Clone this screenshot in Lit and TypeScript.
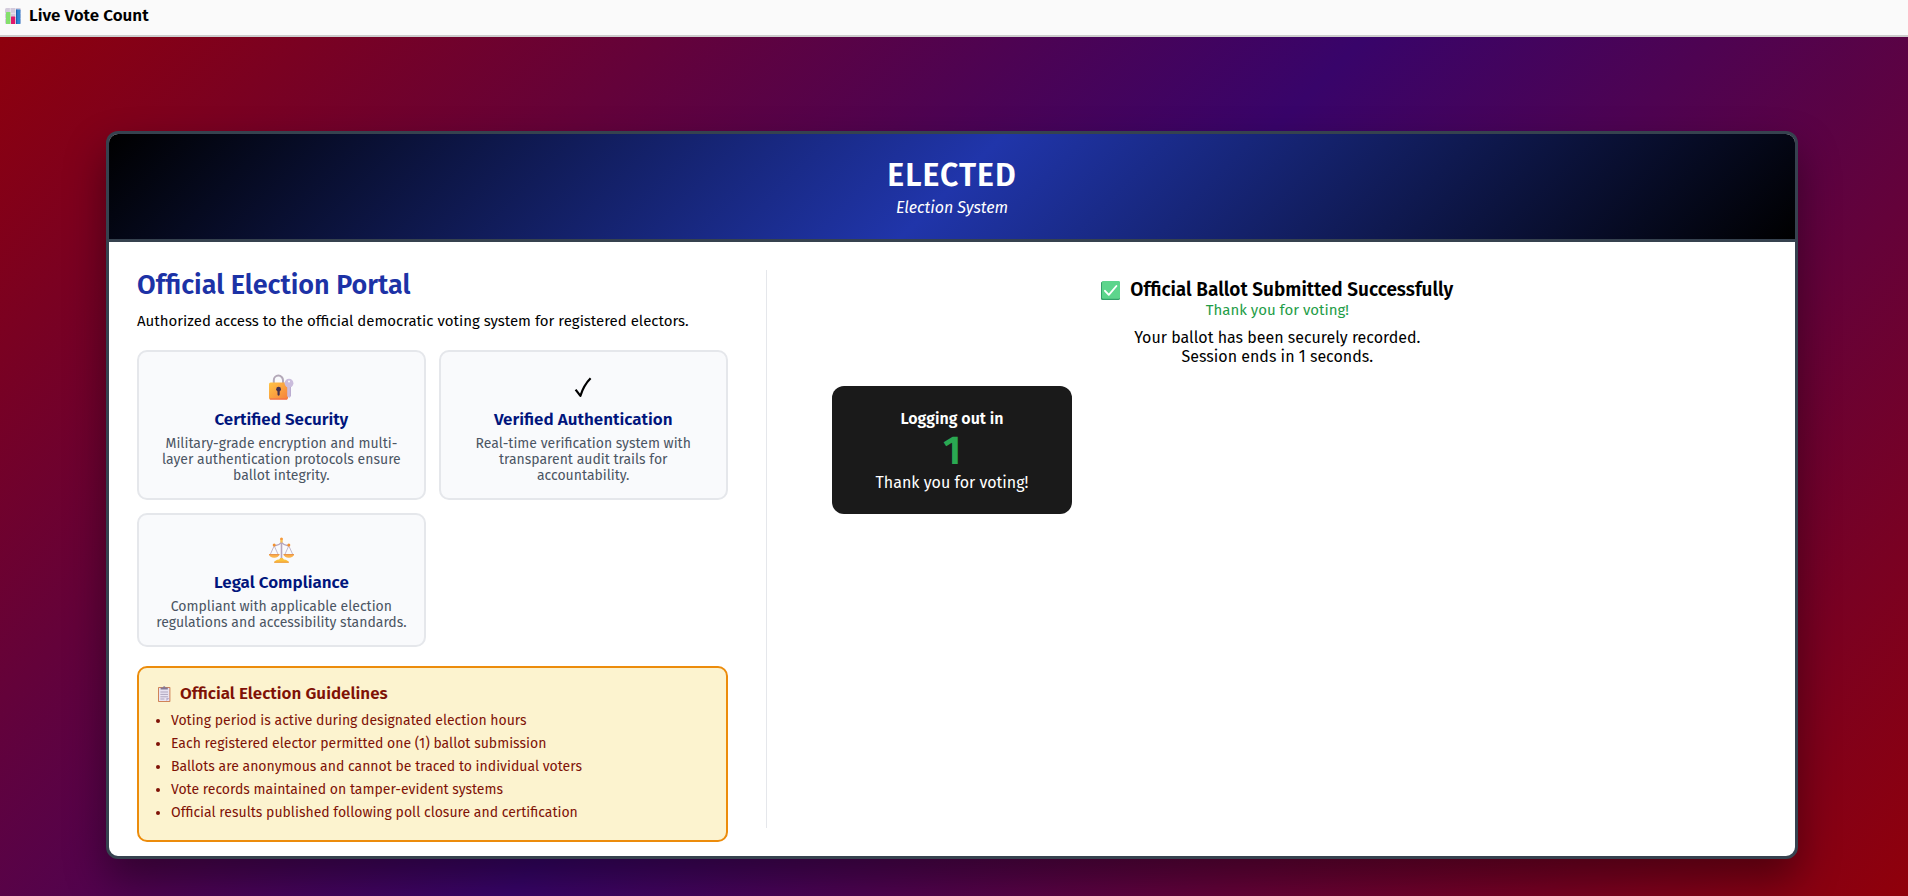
import { LitElement, html, css, svg } from "lit";
import { customElement, property, state } from "lit/decorators.js";

const chartIcon = html`<svg class="icon" viewBox="0 0 16 16" aria-hidden="true">
  <rect x="0" y="0" width="16" height="16" rx="1.5" fill="#d3cbdc" />
  <path d="M0 5.3h16M0 10.6h16M5.3 0v16M10.6 0v16" stroke="#efeaf4" stroke-width=".8" />
  <rect x="1" y="4" width="4.4" height="12" rx=".6" fill="#83e06b" />
  <rect x="6" y="8.6" width="4.2" height="7.4" rx=".6" fill="#e0186c" />
  <rect x="11" y="1.6" width="4.4" height="14.4" rx=".6" fill="#2f86d6" />
  <rect x="11" y="1.6" width="1.2" height="14.4" fill="#1c62b0" />
</svg>`;

const clipboardIcon = html`<svg class="icon" viewBox="0 0 16 16" aria-hidden="true">
  <rect x="2" y="1" width="12.4" height="15" rx=".8" fill="#cf8358" />
  <rect x="3" y="2" width="10.4" height="13" fill="#e9e4f2" />
  <path d="M10.4 15v-3h3z" fill="#b9aed0" />
  <path d="M4.4 6h7.600M4.400 8.400h7.600M4.400 10.800h7.600M4.400 13h4" stroke="#a79db8" stroke-width=".9" />
  <path d="M4.600 3.600V1.400H7a1.200 1.200 0 0 1 2.400 0h2.400v2.200z" fill="#847894" />
</svg>`;

const tickBoxIcon = html`<svg class="icon-md" viewBox="0 0 19 19" aria-hidden="true">
  <rect x="0" y=".4" width="19" height="18.6" rx="1.6" fill="#35a06a" />
  <rect x="1" y="0" width="18" height="17.8" rx="1.4" fill="#5dd58c" />
  <path d="M4 9.8l3.8 4L15.4 5" fill="none" stroke="#fff" stroke-width="1.9" stroke-linecap="round" stroke-linejoin="round" />
</svg>`;

const lockIcon = svg`
  <defs><linearGradient id="body" x1="0" y1="0" x2="1" y2="1">
    <stop offset="0" stop-color="#ffc444" /><stop offset="1" stop-color="#f57f3c" />
  </linearGradient></defs>
  <path d="M4.800 10V6.200a4.600 4.600 0 0 1 9.200 0V10" fill="none" stroke="#b3a8b8" stroke-width="2" />
  <rect x="0" y="8.600" width="19" height="17" rx="1.600" fill="url(#body)" />
  <path d="M1 25h17" stroke="#f26f4c" stroke-width="1.200" />
  <circle cx="9.600" cy="15.200" r="2.400" fill="#42304f" />
  <path d="M9.600 15v5.600" stroke="#42304f" stroke-width="2.200" stroke-linecap="round" />
  <circle cx="20" cy="9.200" r="4.400" fill="#cabcdc" />
  <path d="M18.200 12h3.800v10.200L20.200 24l-2-1.800z" fill="#cabcdc" />
  <circle cx="20" cy="7.600" r="1" fill="#f9fafc" />
  <path d="M21.400 13v9" stroke="#b5a4cc" stroke-width=".8" />`;

const checkIcon = svg`
  <path d="M4.600 15.600l4.800 6.200C11.400 15.400 14.400 9.400 19.600 4.200" fill="none" stroke="#000" stroke-width="2.200" stroke-linejoin="round" />`;

const scaleIcon = svg`
  <path d="M12.500 4v18" stroke="#b6a6be" stroke-width="1.600" />
  <path d="M5.400 8.400c3.400.8 5-.6 7.100-3 2.100 2.400 3.700 3.800 7.100 3" fill="none" stroke="#b6a6be" stroke-width="1.400" />
  <path d="M5.200 8.800L1.200 17.600M5.200 8.800l4 8.800M19.800 8.800l-4 8.800M19.800 8.800l4 8.800" stroke="#bdb0c6" stroke-width=".9" />
  <path d="M0 17h10.400a5.200 3.800 0 0 1-10.400 0zM14.600 17H25a5.200 3.800 0 0 1-10.400 0z" fill="#fbb34c" />
  <path d="M0 17h10.400v1.200H0zM14.600 17H25v1.200H14.600z" fill="#e9954a" />
  <circle cx="12.500" cy="2" r="1.500" fill="#f59a3a" />
  <rect x="11.400" y="3" width="2.200" height="2.600" fill="#f7c052" />
  <circle cx="5.200" cy="8" r="1.500" fill="#f3912f" /><circle cx="19.800" cy="8" r="1.500" fill="#f3912f" />
  <path d="M5.200 25.600c0-2 2.600-3 5-3.200l1-1.400h2.600l1 1.400c2.400.2 5 1.200 5 3.200z" fill="#fbc13c" />
  <path d="M5.200 24.600h14.600v1.200H5.200z" fill="#ef9d3d" />`;

interface Feature {
  icon: unknown;
  title: string;
  text: string;
}

const FEATURES: Feature[] = [
  {
    icon: lockIcon,
    title: "Certified Security",
    text: "Military-grade encryption and multi-layer authentication protocols ensure ballot integrity.",
  },
  {
    icon: checkIcon,
    title: "Verified Authentication",
    text: "Real-time verification system with transparent audit trails for accountability.",
  },
  {
    icon: scaleIcon,
    title: "Legal Compliance",
    text: "Compliant with applicable election regulations and accessibility standards.",
  },
];

const GUIDELINES = [
  "Voting period is active during designated election hours",
  "Each registered elector permitted one (1) ballot submission",
  "Ballots are anonymous and cannot be traced to individual voters",
  "Vote records maintained on tamper-evident systems",
  "Official results published following poll closure and certification",
];

const reset = css`
  * {
    box-sizing: border-box;
  }
  h1, h2, h3, p, ul {
    margin: 0;
    padding: 0;
  }
  h1, h2, h3, strong {
    font-weight: 600;
  }
`;

@customElement("feature-card")
export class FeatureCard extends LitElement {
  static styles = [
    reset,
    css`
      :host {
        display: flex;
        flex-direction: column;
        align-items: center;
        gap: 6px;
        box-sizing: border-box;
        padding: 20px 16px 14px;
        border: 2px solid #e5e7eb;
        border-radius: 10px;
        background: #f9fafc;
        text-align: center;
      }
      .glyph {
        width: 25px;
        height: 26px;
        margin: 2px 0 4px;
      }
      .title {
        color: #00157c;
        font-size: 17px;
        line-height: 20px;
      }
      .text {
        color: #4b5563;
        font-size: 14px;
        line-height: 16px;
      }
    `,
  ];

  @property({ attribute: false }) feature!: Feature;

  render() {
    return html`
      <svg class="glyph" viewBox="0 0 25 26" aria-hidden="true">${this.feature.icon}</svg>
      <h3 class="title">${this.feature.title}</h3>
      <p class="text">${this.feature.text}</p>
    `;
  }
}

@customElement("app-root")
export class AppRoot extends LitElement {
  static styles = [
    reset,
    css`
      :host {
        display: block;
        min-height: 100vh;
        background: linear-gradient(135deg, #90000a, #38046a 50%, #90000a);
        color: #000;
        font-family: "Fira Sans", "Noto Sans", sans-serif;
        font-size: 16px;
        line-height: 20px;
      }
      .topbar {
        display: flex;
        align-items: center;
        gap: 8px;
        padding: 6px 5px 9px;
        border-bottom: 2px solid #ccc;
        background: #fafafa;
      }
      .icon {
        flex: none;
        width: 16px;
        height: 16px;
      }
      .icon-md {
        flex: none;
        width: 19px;
        height: 19px;
      }
      .topbar-title {
        font-size: 17px;
        line-height: 20px;
      }
      .page {
        padding: 94px 110px 37px 106px;
      }
      .card {
        overflow: hidden;
        border: 3px solid #36424f;
        border-radius: 12px;
        background: #fff;
        box-shadow: 0 20px 40px rgba(0, 0, 0, 0.4);
      }
      .header {
        display: flex;
        flex-direction: column;
        gap: 7px;
        padding: 25px 28px 21px;
        border-bottom: 3px solid #36424f;
        background: linear-gradient(135deg, #000, #2035aa 50%, #000);
        color: #fff;
        text-align: center;
      }
      .brand {
        font-size: 32px;
        line-height: 32px;
        letter-spacing: 1px;
      }
      .tagline {
        font-style: italic;
      }
      .body {
        display: grid;
        grid-template-columns: minmax(0, 371fr) minmax(0, 629fr);
        gap: 38px;
        padding: 28px 28px 14px;
      }
      .portal-title {
        color: #1c32a6;
        font-size: 27px;
        line-height: 30px;
      }
      .lead {
        margin: 11px 0 19px;
        font-size: 15px;
      }
      .features {
        display: grid;
        grid-template-columns: repeat(2, minmax(0, 1fr));
        gap: 13px;
      }
      .guidelines {
        margin-top: 19px;
        padding: 17px 17px 16px;
        border: 2px solid #ec8c0c;
        border-radius: 10px;
        background: #fcf3cf;
        color: #7f1206;
      }
      .guidelines-title {
        display: flex;
        align-items: center;
        gap: 8px;
        margin-bottom: 6px;
        font-size: 17px;
        line-height: 18px;
      }
      .rules {
        padding-left: 15px;
        font-size: 14px;
        line-height: 23px;
      }
      .result {
        margin-bottom: 14px;
        padding: 9px 0 0 21px;
        border-left: 1px solid #e5e7eb;
        text-align: center;
      }
      .result-title {
        display: flex;
        align-items: center;
        justify-content: center;
        gap: 10px;
        font-size: 19px;
        line-height: 22px;
      }
      .thanks {
        margin-bottom: 8px;
        color: #1f9d48;
        font-size: 15px;
        line-height: 19px;
      }
      .note {
        line-height: 19px;
      }
      .overlay {
        position: fixed;
        inset: 4px 4px 0 0;
        display: grid;
        place-items: center;
        pointer-events: none;
      }
      .countdown {
        width: 240px;
        padding: 22px 20px 20px;
        border-radius: 12px;
        background: #1a1a1a;
        color: #fff;
        line-height: 22px;
        text-align: center;
      }
      .seconds {
        color: #2aa952;
        font-size: 40px;
        font-weight: 600;
        line-height: 42px;
      }
    `,
  ];

  @state() private seconds = 1;

  render() {
    return html`
      <header class="topbar">
        ${chartIcon}
        <h2 class="topbar-title">Live Vote Count</h2>
      </header>
      <main class="page">
        <section class="card">
          <header class="header">
            <h1 class="brand">ELECTED</h1>
            <p class="tagline">Election System</p>
          </header>
          <div class="body">
            <section>
              <h2 class="portal-title">Official Election Portal</h2>
              <p class="lead">Authorized access to the official democratic voting system for registered electors.</p>
              <div class="features">
                ${FEATURES.map((f) => html`<feature-card .feature=${f}></feature-card>`)}
              </div>
              <section class="guidelines">
                <h3 class="guidelines-title">${clipboardIcon}<span>Official Election Guidelines</span></h3>
                <ul class="rules">
                  ${GUIDELINES.map((g) => html`<li>${g}</li>`)}
                </ul>
              </section>
            </section>
            <section class="result">
              <h2 class="result-title">${tickBoxIcon}<span>Official Ballot Submitted Successfully</span></h2>
              <p class="thanks">Thank you for voting!</p>
              <p class="note">Your ballot has been securely recorded.</p>
              <p class="note">Session ends in ${this.seconds} seconds.</p>
            </section>
          </div>
        </section>
      </main>
      <div class="overlay">
        <div class="countdown" role="status">
          <strong>Logging out in</strong>
          <p class="seconds">${this.seconds}</p>
          <p>Thank you for voting!</p>
        </div>
      </div>
    `;
  }
}
